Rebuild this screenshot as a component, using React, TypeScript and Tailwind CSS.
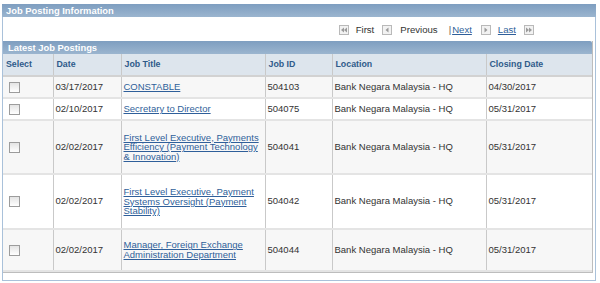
import React from 'react'

interface Posting {
  date: string
  title: string
  id: string
  location: string
  closing: string
  h: string
}

const postings: Posting[] = [
  { date: '03/17/2017', title: 'CONSTABLE', id: '504103', location: 'Bank Negara Malaysia - HQ', closing: '04/30/2017', h: 'h-[22px]' },
  { date: '02/10/2017', title: 'Secretary to Director', id: '504075', location: 'Bank Negara Malaysia - HQ', closing: '05/31/2017', h: 'h-[22px]' },
  { date: '02/02/2017', title: 'First Level Executive, Payments Efficiency (Payment Technology & Innovation)', id: '504041', location: 'Bank Negara Malaysia - HQ', closing: '05/31/2017', h: 'h-[54px]' },
  { date: '02/02/2017', title: 'First Level Executive, Payment Systems Oversight (Payment Stability)', id: '504042', location: 'Bank Negara Malaysia - HQ', closing: '05/31/2017', h: 'h-[55px]' },
  { date: '02/02/2017', title: 'Manager, Foreign Exchange Administration Department', id: '504044', location: 'Bank Negara Malaysia - HQ', closing: '05/31/2017', h: 'h-[42px]' },
]

function NavIcon({ dir, double }: { dir: 'left' | 'right'; double?: boolean }) {
  const tri = (x: number) =>
    dir === 'left' ? `M${x + 3} 2.5 L${x} 5 L${x + 3} 7.5 Z` : `M${x} 2.5 L${x + 3} 5 L${x} 7.5 Z`
  return (
    <svg width="10" height="10" viewBox="0 0 10 10" className="block">
      <rect x="0.5" y="0.5" width="9" height="9" fill="#f2f2f2" stroke="#b9b9b9" />
      {double ? (
        <>
          <path d={tri(2)} fill="#9a9a9a" />
          <path d={tri(5)} fill="#9a9a9a" />
        </>
      ) : (
        <path d={tri(3.5)} fill="#9a9a9a" />
      )}
    </svg>
  )
}

function Checkbox() {
  return <div className="w-[11px] h-[11px] border border-[#9c9c9c] bg-gradient-to-b from-[#e4e4e4] to-[#ffffff] ml-[4px]" />
}

export default function App() {
  const th = 'text-left font-bold text-[#2f5b8a] text-[8.8px] pl-[3px] border-r border-[#c9c9c9] border-b-2 border-b-[#d2d2d2] align-middle'
  const td = 'text-[9.5px] text-[#333] pl-[2px] pr-[2px] border-r border-[#c9c9c9] border-b-2 border-b-[#e4e4e4] align-middle'
  return (
    <div className="bg-white w-[600px] h-[283px] pt-[4px] pl-[2px] font-['Liberation_Sans',Arial,sans-serif]">
      <div className="w-[594px] border-x border-b border-[#a9c1da] pb-[7px]">
        {/* Header */}
        <div className="h-[13px] -mx-px bg-gradient-to-b from-[#7e9ec0] to-[#9bb5cf] text-white font-bold text-[9.4px] leading-[13px] pl-[4px]">
          Job Posting Information
        </div>

        {/* Pagination */}
        <div className="h-[24px] pt-[2px] flex items-center justify-end pr-[61px] text-[9.6px] text-[#333]">
          <NavIcon dir="left" double />
          <span className="ml-[7px]">First</span>
          <span className="ml-[8px]"><NavIcon dir="left" /></span>
          <span className="ml-[8px]">Previous</span>
          <span className="ml-[11px] text-[#555]">|</span>
          <a href="#" className="ml-[1px] text-[#2f5f9a] underline">Next</a>
          <span className="ml-[9px]"><NavIcon dir="right" /></span>
          <a href="#" className="ml-[7px] text-[#2f5f9a] underline">Last</a>
          <span className="ml-[8px]"><NavIcon dir="right" double /></span>
        </div>

        {/* Grid */}
        <div className="mr-[2px] border-r border-b border-[#bdbdbd]">
          <div className="h-[13px] bg-gradient-to-b from-[#7e9ec0] to-[#9bb5cf] rounded-tr-[2px] text-white font-bold text-[9.4px] leading-[13px] pl-[5px]">
            Latest Job Postings
          </div>
          <table className="w-full table-fixed border-collapse">
            <colgroup>
              <col className="w-[50px]" />
              <col className="w-[68px]" />
              <col className="w-[144px]" />
              <col className="w-[67px]" />
              <col className="w-[154px]" />
              <col />
            </colgroup>
            <thead>
              <tr className="h-[22px] bg-[#dde5ed]">
                <th className={th}>Select</th>
                <th className={th}>Date</th>
                <th className={th}>Job Title</th>
                <th className={th}>Job ID</th>
                <th className={th}>Location</th>
                <th className={th + ' border-r-0'}>Closing Date</th>
              </tr>
            </thead>
            <tbody>
              {postings.map((p, i) => (
                <tr key={i} className={`${p.h} ${i % 2 === 0 ? 'bg-[#f7f7f7]' : 'bg-white'}`}>
                  <td className={td}><Checkbox /></td>
                  <td className={td}>{p.date}</td>
                  <td className={td + ' leading-[9.6px]'}>
                    <a href="#" className="text-[#2f5f9a] underline">{p.title}</a>
                  </td>
                  <td className={td}>{p.id}</td>
                  <td className={td}>{p.location}</td>
                  <td className={td + ' border-r-0'}>{p.closing}</td>
                </tr>
              ))}
            </tbody>
          </table>
        </div>
      </div>
    </div>
  )
}
